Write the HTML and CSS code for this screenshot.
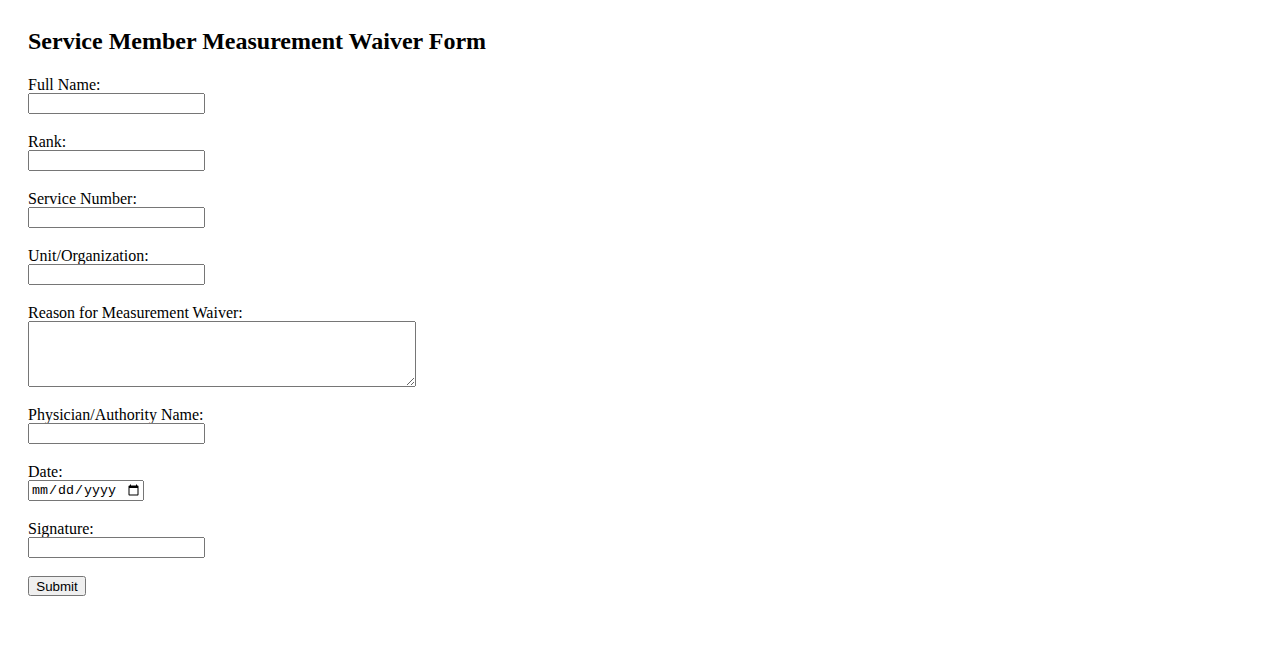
FILE: index.html
```html
<!DOCTYPE html>
<html>
<head>
<meta charset="utf-8">
<title>Service Member Measurement Waiver Form</title>
<link rel="stylesheet" href="styles.css">
</head>
<body>
<h2 class="title">Service Member Measurement Waiver Form</h2>
<form class="form">
  <div class="field">
    <label class="label" for="name">Full Name:</label>
    <input class="text" type="text" id="name">
  </div>
  <div class="field">
    <label class="label" for="rank">Rank:</label>
    <input class="text" type="text" id="rank">
  </div>
  <div class="field">
    <label class="label" for="snum">Service Number:</label>
    <input class="text" type="text" id="snum">
  </div>
  <div class="field">
    <label class="label" for="unit">Unit/Organization:</label>
    <input class="text" type="text" id="unit">
  </div>
  <div class="field">
    <label class="label" for="reason">Reason for Measurement Waiver:</label>
    <textarea class="area" id="reason" rows="4" cols="50"></textarea>
  </div>
  <div class="field">
    <label class="label" for="phys">Physician/Authority Name:</label>
    <input class="text" type="text" id="phys">
  </div>
  <div class="field">
    <label class="label" for="date">Date:</label>
    <input class="date" type="date" id="date">
  </div>
  <div class="field">
    <label class="label" for="sig">Signature:</label>
    <input class="text" type="text" id="sig">
  </div>
  <button class="submit" type="submit">Submit</button>
</form>
</body>
</html>
```
FILE: styles.css
```css
body {
  margin: 8px;
  padding: 20px;
  font-family: "Liberation Serif", "Times New Roman", serif;
  font-size: 16px;
  color: #000;
  background: #fff;
}
.title {
  margin: 0 0 20px 0;
  font-size: 24px;
  font-weight: bold;
}
.form {
  display: flex;
  flex-direction: column;
  align-items: flex-start;
}
.field {
  display: flex;
  flex-direction: column;
  align-items: flex-start;
  margin-bottom: 18px;
}
.label {
  display: block;
  margin-top: 1px;
  margin-bottom: -1px;
}
.text, .area, .date, .submit {
  font-family: "Liberation Sans", Arial, sans-serif;
  font-size: 13.33px;
  box-sizing: border-box;
}
.text {
  width: 177px;
  height: 21px;
}
.area {
  font-family: "Liberation Mono", monospace;
  width: 388px;
  height: 66px;
}
.date {
  font-family: "Liberation Mono", monospace;
  width: 116px;
  height: 21px;
}
.submit {
  width: 58px;
  height: 20px;
}
```
